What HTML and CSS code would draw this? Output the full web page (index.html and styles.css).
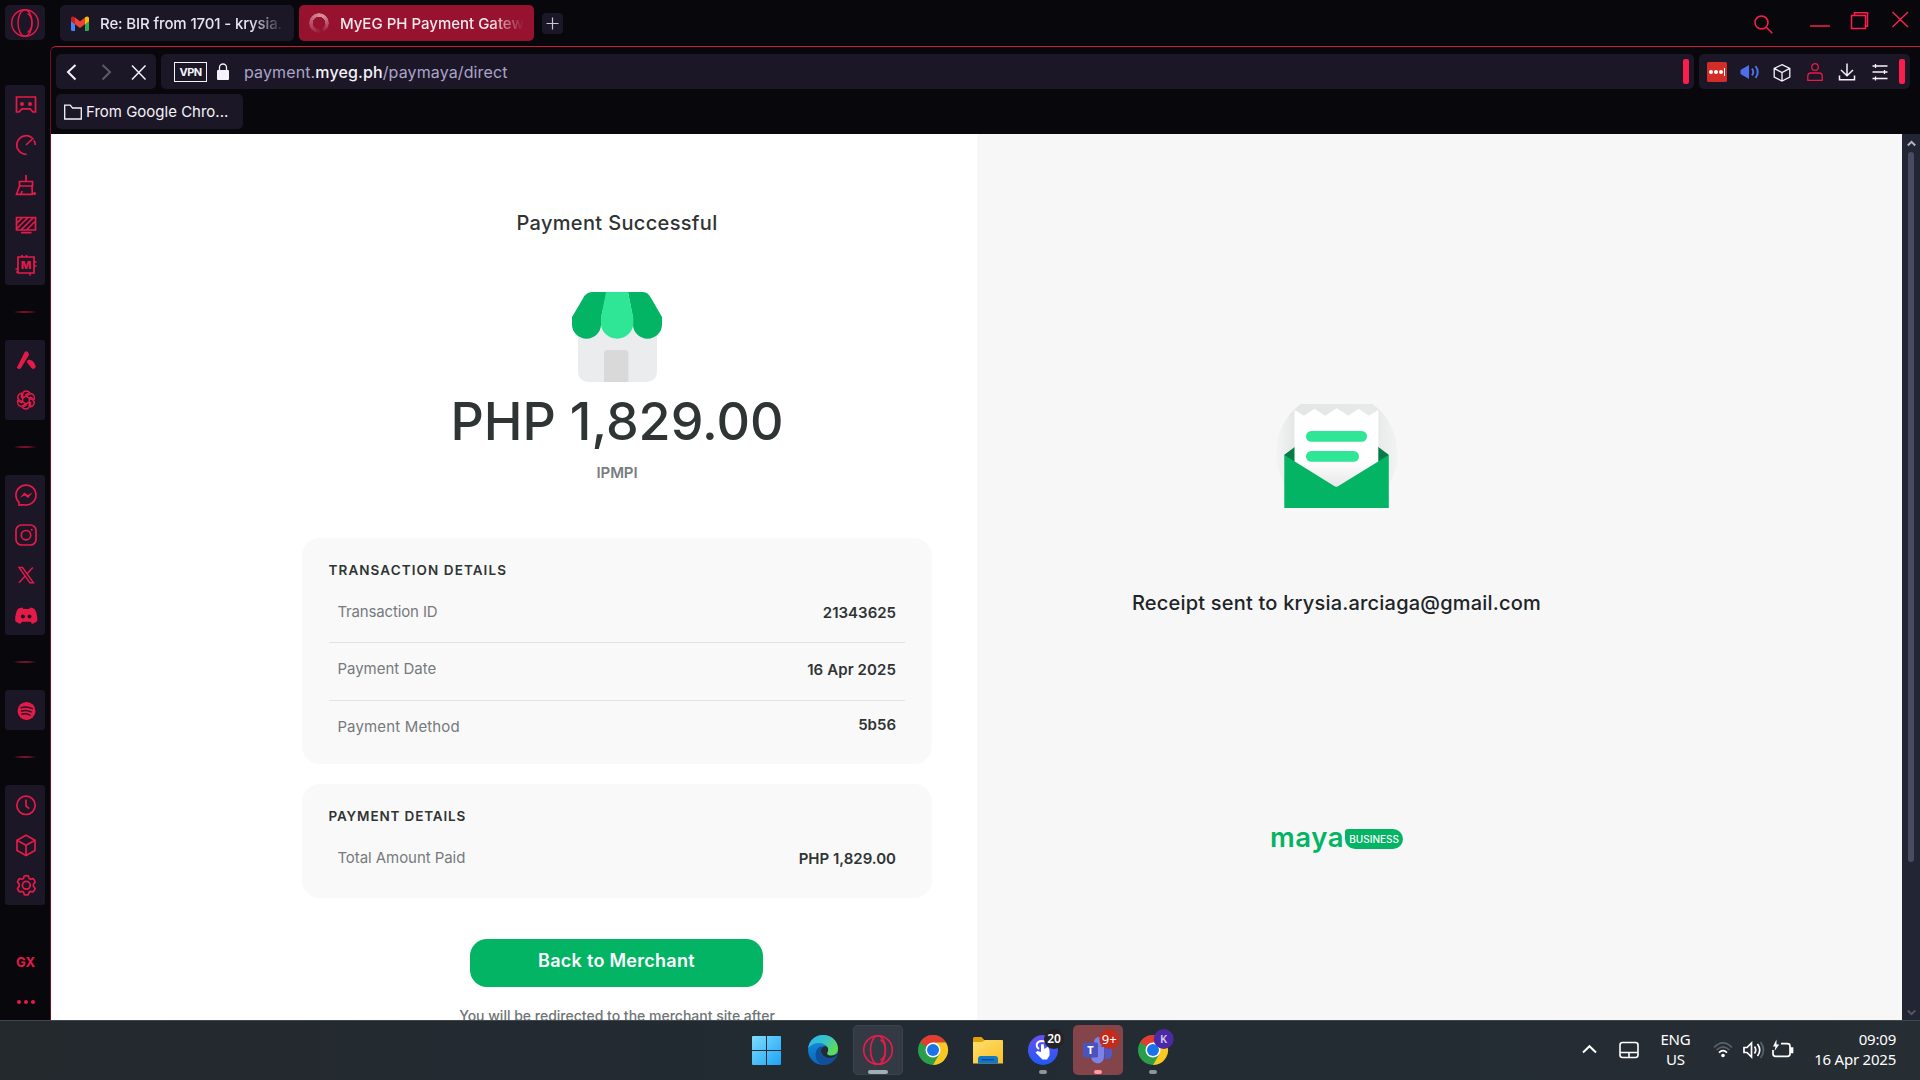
FILE: index.html
```html
<!DOCTYPE html>
<html lang="en">
<head>
<meta charset="utf-8">
<title>MyEG PH Payment Gateway</title>
<link rel="stylesheet" href="styles.css">
</head>
<body>
<div class="browser">
  <aside class="sidebar">
    <div class="opera-button">
      <svg width="30" height="30" viewBox="0 0 30 30" class="line"><ellipse cx="15" cy="15" rx="13.3" ry="13.3"/><ellipse cx="15" cy="15" rx="7" ry="13.3"/><path d="M17.500 5.500c6 4 6 15 0 19"/></svg>
    </div>
    <nav class="side-group first">
      <svg viewBox="0 0 24 24" class="line"><path d="M2.500 4h19v15h-2.500l-3-3.200H8L5 19H2.500z"/><g class="solid"><circle cx="8" cy="11" r="2"/><circle cx="16" cy="11" r="2"/></g></svg>
      <svg viewBox="0 0 24 24" class="line"><path d="M12.500 21.300A9.300 9.300 0 1 1 18 4.800M21.300 12a9 9 0 0 0-1.400-4.600M12 12l7.500-7"/></svg>
      <svg viewBox="0 0 24 24" class="line"><path d="M12 2v6.500M5.500 13V8.500h13V13zM5.500 13L2.500 21.300h15.800L18 13M7 21l1.200-3"/><circle class="solid" cx="20.500" cy="20.500" r="1.600"/></svg>
      <svg viewBox="0 0 24 24" class="line"><path d="M2.500 4.500h19v12.500h-19zM7 19.700h10.500M3 10l5-5M3 15.500L13.500 5M7.500 16.500L19 5M13 16.500l8-8"/></svg>
      <svg viewBox="0 0 24 24" class="line"><path d="M4 4h16v16h-16zM8 4V2M12.500 4V2M4 16H1.500M20 9h2.500M20 13h2.500M16 20v2.500M4 19H2"/><text x="12" y="16" class="chip">M</text></svg>
    </nav>
    <i class="rule"></i>
    <nav class="side-group">
      <svg viewBox="0 0 24 24" class="solid"><path d="M12.200 3.200Q14 3.500 14.500 5L15 7 6.800 20.300Q6 21.500 4.600 20.900L2.800 19.700 10.600 4.300Q11.200 3.200 12.200 3.200zM13.500 12q6-1.500 8.400 7l-1.900 1.800q-1.200.7-2.300-.5L13 14.500z"/></svg>
      <svg viewBox="0 0 24 24" class="line thin"><path id="petal" d="M12 8.200L8.700 10V5.800Q9.200 3 12.200 3q2.200 0 3.500 1.600L12 6.700z"/><use href="#petal" transform="rotate(60 12 12)"/><use href="#petal" transform="rotate(120 12 12)"/><use href="#petal" transform="rotate(180 12 12)"/><use href="#petal" transform="rotate(240 12 12)"/><use href="#petal" transform="rotate(300 12 12)"/></svg>
    </nav>
    <i class="rule"></i>
    <nav class="side-group">
      <svg viewBox="0 0 24 24" class="line"><path d="M5 19.300A10 10 0 1 1 9.500 21.800L5 22z"/><path class="solid" d="M6 14.800l4.300-5.300 3.500 2.500L18.500 9.500 14.200 15 10.500 12.500z"/></svg>
      <svg viewBox="0 0 24 24" class="line"><rect x="2" y="2" width="20" height="20" rx="5.500"/><circle cx="12" cy="12.200" r="4.700"/><circle class="solid" cx="17.700" cy="6.700" r="1"/></svg>
      <svg viewBox="0 0 24 24" class="line thin"><path d="M5 4.500h3.500L19.500 19.800H16zM18.800 4.500l-6 6.500M5 19.800l6.200-6.800"/></svg>
      <svg viewBox="0 0 24 24"><g transform="translate(0 .7)"><path class="solid" d="M8.500 3.800C6.700 4 5 4.700 3.900 5.300 1.900 8.500.9 12.500 1.200 17.200c1.500 1.400 3.300 2.300 5.300 2.900l1.500-2.100h8.500l1.500 2.100c2-.6 3.800-1.500 5.300-2.900.3-4.700-.8-8.700-2.700-11.900-1.300-.7-3-1.300-4.600-1.500l-.7 1.500H9.200z"/><circle cx="8.900" cy="12.700" r="2" fill="#1c1726"/><circle cx="15.500" cy="12.700" r="2" fill="#1c1726"/></g></svg>
    </nav>
    <i class="rule"></i>
    <nav class="side-group">
      <svg viewBox="0 0 24 24"><circle class="solid" cx="12.500" cy="12.900" r="9"/><path d="M7 9.700q6-1.700 11.300 1M7.500 12.900q5-1.300 9.600 1M8 16.100q4-1 8 1" fill="none" stroke="#1c1726" stroke-width="1.500" stroke-linecap="round"/></svg>
    </nav>
    <i class="rule"></i>
    <nav class="side-group">
      <svg viewBox="0 0 24 24" class="line"><circle cx="12" cy="12.300" r="9.200"/><path d="M12 6.500V13l3.200 2.600"/></svg>
      <svg viewBox="0 0 24 24" class="line"><path d="M12 2.200l9 5v10.300l-9 5-9-5V7.200zM3 7.200l9 5 9-5M12 12.200v10"/></svg>
      <svg viewBox="0 0 24 24" class="line"><circle cx="12.300" cy="12.300" r="3.900"/><path d="M10.300 3q2-.8 4 0l.9 2.500 1.200.7 2.700-.5q1.600 1.400 2 3.400l-1.700 2.200v2l1.700 2.200q-.6 2-2 3.400l-2.700-.5-1.200.7-.9 2.500q-2 .8-4 0l-.9-2.500-1.200-.7-2.700.5q-1.500-1.400-2-3.400l1.700-2.200v-2L3.500 9.100q.5-2 2-3.400l2.700.5 1.200-.7z"/></svg>
    </nav>
    <div class="gx">GX</div>
    <div class="more"><i></i><i></i><i></i></div>
  </aside>

  <div class="main">
    <header class="tabstrip">
      <div class="tab">
        <svg width="18" height="15" viewBox="0 0 18 15"><path fill="#4285f4" d="M0 2h4v13H1.200Q0 15 0 13.800z"/><path fill="#34a853" d="M14 2h4v11.800q0 1.200-1.200 1.200H14z"/><path fill="#fbbc04" d="M14 1.500Q16 0 17.500 1q.5.500.5 1.500v2.800L14 8.200z"/><path fill="#c5221f" d="M4 1.500Q2 0 .5 1 0 1.500 0 2.500v2.800l4 2.900z"/><path fill="#ea4335" d="M4 1.500l5 3.800 5-3.800v6.700L9 12 4 8.200z"/></svg>
        <span class="tab-title mail">Re: BIR from 1701 - krysia.</span>
      </div>
      <div class="tab active">
        <i class="spinner"></i>
        <span class="tab-title">MyEG PH Payment Gatew</span>
      </div>
      <div class="new-tab"><svg width="13" height="13" viewBox="0 0 13 13"><path d="M6.500.5v12M.5 6.500h12" stroke="#c9c5d8" stroke-width="1.200"/></svg></div>
      <div class="window-buttons">
        <svg width="150" height="40" viewBox="0 0 150 40"><path d="M16.300 27.300l6 6M60 26h20M101.500 15.500h14v13h-14zM104.500 15V12.700h13v13.500H115.500M142.500 12l15.500 15M158 12l-15.500 15"/><circle cx="11.500" cy="22.500" r="6.500"/></svg>
      </div>
    </header>

    <div class="window">
      <div class="toolbar">
        <div class="nav-box">
          <svg width="100" height="35" viewBox="0 0 100 35" fill="none" stroke-width="2"><path d="M19.500 11l-7.500 7 7.500 7.500" stroke="#f4f2fa"/><path d="M46.500 11l7.500 7-7.500 7.500" stroke="#5d5968"/><path d="M76 11.500l13.500 14M89.500 11.500l-13.500 14" stroke="#f4f2fa" stroke-width="1.500"/></svg>
        </div>
        <div class="address">
          <span class="vpn">VPN</span>
          <svg width="12" height="17" viewBox="0 0 12 17"><rect y="7" width="12" height="10" rx="1" fill="#f4f2fa"/><path d="M2.500 7.500V4.500a3.500 3.500 0 0 1 7 0v3" fill="none" stroke="#f4f2fa" stroke-width="1.300"/></svg>
          <span class="url">payment.<b>myeg.ph</b>/paymaya/direct</span>
          <i class="handle"></i>
        </div>
        <div class="tools">
          <svg width="20" height="20" viewBox="0 0 20 20"><rect width="20" height="20" rx="1.500" fill="#d32d27"/><g fill="#fff"><circle cx="4" cy="10" r="2"/><circle cx="9" cy="10" r="2"/><circle cx="14" cy="10" r="2"/><path d="M17 6h1v8h-1z"/></g></svg>
          <svg width="20" height="20" viewBox="0 0 20 20"><path d="M.5 8L9 3v14L.5 12z" fill="#4f6ee8"/><path d="M12 6.500q2.500 3.500 0 7M15.500 4q4.500 6 0 12" fill="none" stroke="#4f6ee8" stroke-width="2"/></svg>
          <svg width="20" height="20" viewBox="0 0 20 20" fill="none" stroke="#f4f2fa" stroke-width="1.300"><path d="M10 2.700l7.800 3.700v8.800L10 19l-7.800-3.800V6.400zM2.200 6.400L10 10.500l7.800-4.100M10 10.500V19"/></svg>
          <svg width="20" height="20" viewBox="0 0 20 20" fill="none" stroke="#e61a49" stroke-width="1.300"><circle cx="10" cy="5" r="3.300"/><path d="M2.800 18.300v-4q0-3.300 3-3.300h8.400q3 0 3 3.300v4z"/></svg>
          <svg width="20" height="20" viewBox="0 0 20 20" fill="none" stroke="#f4f2fa" stroke-width="1.500"><path d="M10 1.500v12M4 8l6 5.700L16 8M2.500 13.500v4.200h15v-4.200"/></svg>
          <svg width="20" height="20" viewBox="0 0 20 20" fill="none" stroke="#f4f2fa" stroke-width="1.300"><path d="M2.500 4h15M2.500 10h15M2.500 16.500h15M5.500 2v4M14.500 8v4M5.500 14.500v4"/></svg>
          <i class="handle"></i>
        </div>
      </div>
      <div class="bookmarks">
        <div class="bookmark">
          <svg width="18" height="16" viewBox="0 0 18 16"><path d="M.7 1.200h5.500l2.300 2.800h8.800v11H.7z" fill="none" stroke="#f4f2fa" stroke-width="1.300"/></svg>
          <span>From Google Chro...</span>
        </div>
      </div>

      <div class="viewport">
        <main class="payment">
          <h1 class="status">Payment Successful</h1>
          <svg class="store" width="90" height="90" viewBox="0 0 90 90"><rect x="6" y="25" width="79" height="65" rx="10" fill="#ebecee"/><path d="M32 90V61.500Q32 58 35.500 58h17.300Q56.300 58 56.300 61.500V90z" fill="#d9d9d9"/><path d="M20 0H35L29 26V32.500a14.500 14.200 0 0 1-29 0V25L11 6.500Q14 0 20 0zM56 0H71Q76 0 79 6L90 25V32.500a14.500 14.200 0 0 1-29 0V26z" fill="#02b463"/><path d="M34 0H56L61.300 26V31a16.200 15.700 0 0 1-32.400 0V26z" fill="#2ee695"/></svg>
          <div class="amount">PHP 1,829.00</div>
          <div class="merchant">IPMPI</div>
          <section class="card">
            <h2>TRANSACTION DETAILS</h2>
            <div class="row"><span class="key id">Transaction ID</span><span class="value">21343625</span></div>
            <div class="row lifted"><span class="key">Payment Date</span><span class="value date">16 Apr 2025</span></div>
            <div class="row lifted"><span class="key method">Payment Method</span><span class="value raised">5b56</span></div>
          </section>
          <section class="card short">
            <h2 class="narrow">PAYMENT DETAILS</h2>
            <div class="row lifted"><span class="key total">Total Amount Paid</span><span class="value">PHP 1,829.00</span></div>
          </section>
          <button class="back">Back to Merchant</button>
          <p class="redirect">You will be redirected to the merchant site after</p>
        </main>
        <section class="receipt">
          <svg class="envelope" width="122" height="104" viewBox="0 0 122 104">
            <defs><linearGradient id="halo" x1="0" x2="1"><stop offset="0" stop-color="#f3f4f4"/><stop offset=".16" stop-color="#e4e6e6"/><stop offset=".84" stop-color="#e8e9e9"/><stop offset="1" stop-color="#f2f3f3"/></linearGradient><linearGradient id="paper" x1="0" x2="0" y1="0" y2="1"><stop offset=".65" stop-color="#fff"/><stop offset="1" stop-color="#e6e6e6"/></linearGradient></defs>
            <circle cx="60.700" cy="49" r="60.700" fill="url(#halo)"/>
            <path d="M8 51l12-9v18zM113 51l-12-9v18z" fill="#057c45"/>
            <path d="M18.500 6l9.500 5.700 10.300-7 11 7 11.400-7.400 11.600 7.400 10.400-7 10 7 9.600-5.700V60L60.500 84 18.500 60z" fill="url(#paper)"/>
            <rect x="30" y="27" width="61" height="10.700" rx="5.300" fill="#2ee695"/><rect x="30" y="47" width="53" height="10.700" rx="5.300" fill="#2ee695"/>
            <path d="M8.300 51l49.500 30.800q2.500 1.700 5 0L112.800 51v53H8.300z" fill="#02b463"/>
          </svg>
          <p class="sent">Receipt sent to krysia.arciaga@gmail.com</p>
          <div class="brand"><span class="maya">maya</span><span class="business">BUSINESS</span></div>
        </section>
        <div class="scrollbar">
          <svg width="18" height="18" viewBox="0 0 18 18"><path d="M5.800 11.500L9.500 7.800l3.700 3.700" fill="none" stroke="#b4b4bc" stroke-width="2"/></svg>
          <i class="thumb"></i>
          <svg width="18" height="18" viewBox="0 0 18 18"><path d="M5.800 8.500l3.700 3.700 3.700-3.700" fill="none" stroke="#55565c" stroke-width="2"/></svg>
        </div>
      </div>
    </div>
  </div>
</div>

<footer class="taskbar">
  <div class="apps">
    <svg width="50" height="50" viewBox="0 0 50 50"><defs><linearGradient id="win" x1="0" y1="0" x2="1" y2="1" ><stop offset="0" stop-color="#7fdcff"/><stop offset="1" stop-color="#1ba3f5"/></linearGradient></defs><path d="M9 12q0-1 1-1h13v14H9zM24 11h13q1 0 1 1v13H24zM9 26h14v14H10q-1 0-1-1zM24 26h14v13q0 1-1 1H24z" fill="url(#win)"/></svg>
    <svg width="50" height="50" viewBox="0 0 50 50"><defs><linearGradient id="edgeTop" x1="0" x2="1" y1="0" y2=".6"><stop offset="0" stop-color="#2fb5ea"/><stop offset=".5" stop-color="#35c1d0"/><stop offset="1" stop-color="#62dd4e"/></linearGradient><linearGradient id="edgeLow" x1="0" x2="0" y1="0" y2="1"><stop offset="0" stop-color="#1592dc"/><stop offset="1" stop-color="#0a66bd"/></linearGradient></defs><circle cx="25" cy="25" r="15" fill="url(#edgeLow)"/><path d="M17.500 29.500q0-7 7-8.500-3.500 4 0 9t13.500 2q-5 9-13 8-7.500-2.500-7.500-10.500z" fill="#104f99"/><path d="M10.200 23C11.500 15 17.500 10 25 10c8.500 0 15 6 15 13.500 0 5-4 7-7.500 7-3.500 0-5-1.200-3-3.500 1.500-2.500 0-7-5-8.500-5-1.500-11 .5-14.300 4.500z" fill="url(#edgeTop)"/><path d="M29.500 27q2-3.500-1.500-6-6 .5-5 6 2.500 6.500 10 6 5-.500 7-4.500-7 4-10.500 1-.6-1 0-2.500z" fill="#222b33"/></svg>
    <svg class="open" width="50" height="50" viewBox="0 0 50 50"><g fill="none" stroke="#e81c4c" stroke-width="1.600"><circle cx="25" cy="25" r="14.300"/><ellipse cx="25" cy="25" rx="7.500" ry="14.300"/><path d="M27.500 14.500c6.500 4 6.500 17 0 21"/></g><rect x="15" y="45" width="20" height="4" rx="2" fill="#9fb0b4"/></svg>
    <svg width="50" height="50" viewBox="0 0 50 50"><g id="chrome"><circle cx="25" cy="25" r="15" fill="#2b9e49"/><path d="M25 25L12 17.500A15 15 0 0 1 38 17.500H25z" fill="#e53b30"/><path d="M25 17.500H38A15 15 0 0 1 25 40l6.500-11.300z" fill="#fcc721"/><path d="M12 17.500l6.500 11.300L25 25z" fill="#2b9e49"/><circle cx="25" cy="25" r="7.500" fill="#fff"/><circle cx="25" cy="25" r="6" fill="#1a73e8"/></g></svg>
    <svg width="50" height="50" viewBox="0 0 50 50"><defs><linearGradient id="dir" x1="0" x2="1" y1="0" y2="1"><stop offset="0" stop-color="#ffdf70"/><stop offset="1" stop-color="#fbbf24"/></linearGradient></defs><path d="M10 13.500Q10 12 11.500 12h7l3 3.200H28V24H10z" fill="#e3a008"/><path d="M10 17h9l3-2h17q1 0 1 1v22.500H10z" fill="url(#dir)"/><path d="M15 38.500V34q0-3 3-3h14q3 0 3 3v4.500z" fill="#0f78c8"/><path d="M18.500 34.700h12.500" stroke="#0a4c8a" stroke-width="1.300"/></svg>
    <svg width="50" height="50" viewBox="0 0 50 50"><defs><linearGradient id="blue" x1="0" x2="0" y1="0" y2="1"><stop offset="0" stop-color="#6a50f0"/><stop offset="1" stop-color="#1f5af6"/></linearGradient></defs><circle cx="25" cy="25" r="15" fill="url(#blue)"/><path d="M27 16.500q-6-1.500-8 2-1 3.500 2 5.500" fill="none" stroke="#fff" stroke-width="2"/><path d="M17.500 27.500l2-1.500 3.500 1V19.500l2.500-.5 1 5 3.500-2.500 1.500 3.500v5.500L29 34.500h-4.500z" fill="#fff"/><circle cx="36" cy="14" r="10" fill="#242327"/><text x="36" y="18.300" class="count dark">20</text><rect x="21" y="45" width="8" height="4" rx="2" fill="#8d949a"/></svg>
    <svg class="alert" width="50" height="50" viewBox="0 0 50 50"><circle cx="26" cy="17" r="5" fill="#7b83eb"/><path d="M31 22h8v8q-1 5-7 4z" fill="#5059c9"/><path d="M18 22h13v9q0 7-6 7.500-7-.5-7-8z" fill="#7b83eb"/><rect x="10" y="17.500" width="15" height="15" rx="1.500" fill="#4b53bc"/><text x="17.500" y="29" class="tee">T</text><circle cx="36.300" cy="14" r="10" fill="#c42b1c"/><text x="36.300" y="18.500" class="count">9+</text><rect x="21" y="45" width="8" height="4" rx="2" fill="#ff99a4"/></svg>
    <svg width="50" height="50" viewBox="0 0 50 50"><use href="#chrome"/><circle cx="35.700" cy="14" r="10" fill="#4c2aa5"/><text x="35.500" y="18.300" class="count kay">K</text><rect x="21" y="45" width="8" height="4" rx="2" fill="#8d949a"/></svg>
  </div>
  <div class="tray">
    <svg width="58" height="30" viewBox="0 0 58 30" fill="none" stroke="#fff"><path d="M1 17.500l6.500-6.300 6.500 6.300" stroke-width="2"/><rect x="38" y="7.500" width="18" height="15" rx="2.500" stroke-width="1.600"/><path d="M38 17.500h18M47 17.500v5" stroke-width="1.600"/></svg>
    <div class="lang"><span>ENG</span><span>US</span></div>
    <svg class="status-icons" width="82" height="30" viewBox="0 0 82 30" fill="none" stroke="#fff"><g stroke-width="1.700"><path d="M1 12.500q9-9 18 0M3.500 15q6.500-6.500 13 0" stroke="#59626a"/><path d="M6 17.700q4-4 8 0"/><circle cx="10" cy="20.500" r="1.800" fill="#fff" stroke="none"/><path d="M31 12.500h3l4.500-4.500v14L34 17.500h-3zM41.500 11.500q2.500 3.500 0 7M44.500 9q4.500 6 0 12"/><path d="M47.500 7q6 8 0 16" stroke="#59626a"/></g><path d="M68 8.700h6.500q2.500 0 2.500 2.500v7.600q0 2.500-2.500 2.500h-12q-2.500 0-2.500-2.500V15M78 13v4.500h1.500V13z" stroke-width="1.700"/><path d="M63.500 4.500L60 11.500h2.500L61.500 16l4.700-6.500h-2.700z" fill="#fff" stroke="none"/></svg>
    <div class="clock"><span>09:09</span><span>16 Apr 2025</span></div>
  </div>
</footer>
</body>
</html>
```
FILE: styles.css
```css
* { box-sizing: border-box; }
body { margin: 0; width: 1920px; height: 1080px; overflow: hidden; display: flex; flex-direction: column; background: #08070c; font-family: Inter, "Liberation Sans", sans-serif; color: #2f3434; }
h1, h2, p { margin: 0; font-weight: 500; }
svg { flex: none; display: block; }

.browser { height: 1020px; display: flex; }

/* Sidebar */
.sidebar { width: 50px; flex: none; padding: 5px 5px 0; display: flex; flex-direction: column; align-items: center; }
.opera-button { width: 40px; height: 35px; border-radius: 5px; background: #1c1726; display: flex; align-items: center; justify-content: center; }
.opera-button svg { stroke-width: 1.4; }
.side-group { width: 40px; padding-left: 1px; background: #1c1726; border-radius: 3px; display: flex; flex-direction: column; align-items: center; }
.side-group.first { margin-top: 45px; }
.side-group svg { width: 24px; height: 24px; margin: 8px 0; }
.line { fill: none; stroke: #e61a49; stroke-width: 1.7; }
.line.thin { stroke-width: 1.4; }
.solid { fill: #e61a49; stroke: none; }
.chip { font-size: 11px; font-weight: 800; text-anchor: middle; fill: #e61a49; stroke: none; }
.rule { width: 26px; height: 2px; margin: 26px 0 27px; background: radial-gradient(closest-side, #e61a49, transparent); }
.gx { margin-top: 49px; padding-left: 1px; height: 16px; line-height: 16px; font-size: 13px; font-weight: 700; color: #e61a49; }
.more { display: flex; gap: 3px; margin-top: 30px; padding-left: 1px; }
.more i { width: 4px; height: 4px; border-radius: 2px; background: #e61a49; }

/* Tabs */
.main { flex: 1; min-width: 0; display: flex; flex-direction: column; }
.tabstrip { height: 46px; padding: 5px 0 0 10px; display: flex; align-items: flex-start; }
.tab { width: 234px; height: 36px; margin-right: 5.4px; padding: 0 10px 0 11px; border-radius: 5px; background: #1c1726; display: flex; align-items: center; gap: 11px; color: #e8e6f0; font-size: 15px; }
.tab-title { flex: 1; white-space: nowrap; overflow: hidden; font-weight: 500; -webkit-mask-image: linear-gradient(90deg, #000 82%, transparent); mask-image: linear-gradient(90deg, #000 82%, transparent); }
.tab-title.mail { letter-spacing: -.13px; }
.tab.active { width: 235px; margin-right: 7.6px; padding-left: 9.5px; background: #97122f; color: #f3e8ec; }
.spinner { width: 20px; height: 20px; border-radius: 50%; background: conic-gradient(#d68c9b 10%, #97122f 45%, #b5546a 75%, #d68c9b); -webkit-mask: radial-gradient(circle, transparent 6px, #000 6.5px); mask: radial-gradient(circle, transparent 6px, #000 6.5px); }
.new-tab { width: 21px; height: 21px; margin-top: 8px; border-radius: 4px; background: #1c1726; display: flex; align-items: center; justify-content: center; }
.window-buttons { margin-left: auto; margin-right: 20.5px; }
.window-buttons svg { fill: none; stroke: #fa1e4e; stroke-width: 1.5; overflow: visible; margin-top: -5px; }

/* Toolbar */
.window { flex: 1; min-height: 0; border-top: 1px solid #d0193f; border-left: 1px solid #6b1025; border-radius: 6px 0 0 0; display: flex; flex-direction: column; }
.toolbar { display: flex; gap: 5px; padding: 7px 10px 0 5px; height: 47px; }
.nav-box, .address, .tools { height: 35px; border-radius: 5px; background: #1c1726; }
.nav-box { width: 100px; }
.address { flex: 1; display: flex; align-items: center; padding: 0 5px 0 13px; }
.vpn { width: 33px; height: 20px; margin-right: 10px; border: 1px solid #f4f2fa; color: #f4f2fa; font-size: 11px; font-weight: 700; line-height: 18px; text-align: center; letter-spacing: -.6px; }
.url { margin-left: 15px; font-size: 16px; letter-spacing: .12px; color: #aaa3cb; }
.url b { font-weight: 500; color: #f4f2fa; }
.handle { flex: none; width: 6px; height: 25px; margin-left: auto; border-radius: 2px; background: #fa1e4e; }
.tools { width: 211px; display: flex; align-items: center; gap: 12.5px; padding: 0 5px 0 8px; }
.tools .handle { margin-left: -3px; }
.bookmarks { height: 40px; padding-left: 5px; }
.bookmark { width: 187px; height: 35px; padding-left: 8px; border-radius: 5px; background: #1c1726; display: flex; align-items: center; gap: 4px; font-size: 15px; color: #f4f2fa; }

/* Page */
.viewport { flex: 1; min-height: 0; display: flex; overflow: hidden; }
.payment { width: 926px; background: #fff; padding: 74px 45px 0 251px; display: flex; flex-direction: column; align-items: center; overflow: hidden; }
.payment > * { flex: none; }
.status { height: 30px; line-height: 30px; font-size: 20px; letter-spacing: .34px; }
.store { margin-top: 54px; }
.amount { height: 60px; line-height: 60px; margin-top: 10px; font-size: 52px; font-weight: 500; white-space: nowrap; }
.merchant { height: 20px; line-height: 20px; margin-top: 11px; font-size: 15px; font-weight: 600; letter-spacing: -.1px; color: #777d7f; }
.card { width: 630px; height: 226px; margin-top: 55px; padding: 22px 27px 0; border-radius: 18px; background: #f9f9f9; }
.card.short { height: 114px; margin-top: 20px; }
.card h2 { height: 20px; margin: 0 0 5px -.5px; line-height: 20px; font-size: 13.5px; font-weight: 600; letter-spacing: 1.08px; }
.card h2.narrow { letter-spacing: .85px; }
.row { height: 58px; padding: 0 9px 4px 8.4px; border-bottom: 1px solid #dfe2e6; display: flex; align-items: center; justify-content: space-between; }
.row.lifted { padding-bottom: 6px; }
.row:last-child { border-bottom: 0; }
.key { font-size: 15px; color: #767b7d; }
.key.id { letter-spacing: -.15px; }
.key.method { padding-bottom: 2px; letter-spacing: .15px; }
.key.total { letter-spacing: -.06px; }
.value { padding-top: 2px; font-size: 15px; font-weight: 600; }
.value.date { letter-spacing: .1px; }
.value.raised { padding: 0 0 5px; }
.back { width: 293px; height: 48px; margin: 41px 1px 0 0; padding: 0 0 5px; border: 0; border-radius: 17px; background: #02b463; color: #fff; font: 600 18px Inter, sans-serif; letter-spacing: .28px; }
.redirect { height: 20px; line-height: 20px; margin-top: 19px; font-size: 14px; color: #6f7577; white-space: nowrap; }

.receipt { width: 925px; background: #f7f7f7; padding: 270px 206px 0 0; display: flex; flex-direction: column; align-items: center; }
.sent { height: 30px; margin-top: 80px; line-height: 30px; font-size: 20px; letter-spacing: .2px; color: #202427; white-space: nowrap; }
.brand { display: flex; align-items: flex-start; margin-top: 211px; }
.maya { height: 24px; line-height: 16px; font-size: 27.5px; font-weight: 600; letter-spacing: .6px; color: #02b463; }
.business { width: 58px; height: 20px; margin-left: 1px; border-radius: 3px 10px 10px 10px; background: #02b463; color: #fff; font-size: 10px; font-weight: 500; line-height: 20px; text-align: center; }

.scrollbar { width: 18px; background: #222533; display: flex; flex-direction: column; align-items: center; }
.thumb { width: 6px; height: 710px; margin-bottom: auto; border-radius: 3px; background: #4a4a63; }

/* Taskbar */
.taskbar { height: 60px; border-top: 1px solid #3f474d; background: linear-gradient(90deg, #24292e, #222b33 50%, #262d33); display: flex; justify-content: space-between; padding: 4px 24px 0 743px; font-family: "Noto Sans", "Open Sans", sans-serif; color: #fff; font-size: 15px; }
.apps { display: flex; gap: 5px; }
.open { border-radius: 5px; background: #333a44; box-shadow: inset 0 0 0 1px #3b424b; }
.alert { border-radius: 5px; background: #83444a; }
.count { font-size: 13px; text-anchor: middle; fill: #fff; }
.count.dark { font-weight: 600; font-size: 12px; }
.count.kay { font-weight: 600; font-size: 11px; fill: #d5c8f5; }
.tee { font-size: 11px; font-weight: 700; text-anchor: middle; fill: #fff; }
.tray { display: flex; align-items: center; height: 50px; }
.lang, .clock { display: flex; flex-direction: column; line-height: 20px; letter-spacing: -.22px; white-space: nowrap; }
.lang { width: 34px; margin: -2px 0 0 19px; align-items: center; }
.status-icons { margin-left: 20px; }
.clock { width: 101.5px; margin-top: -2px; align-items: flex-end; }
```
